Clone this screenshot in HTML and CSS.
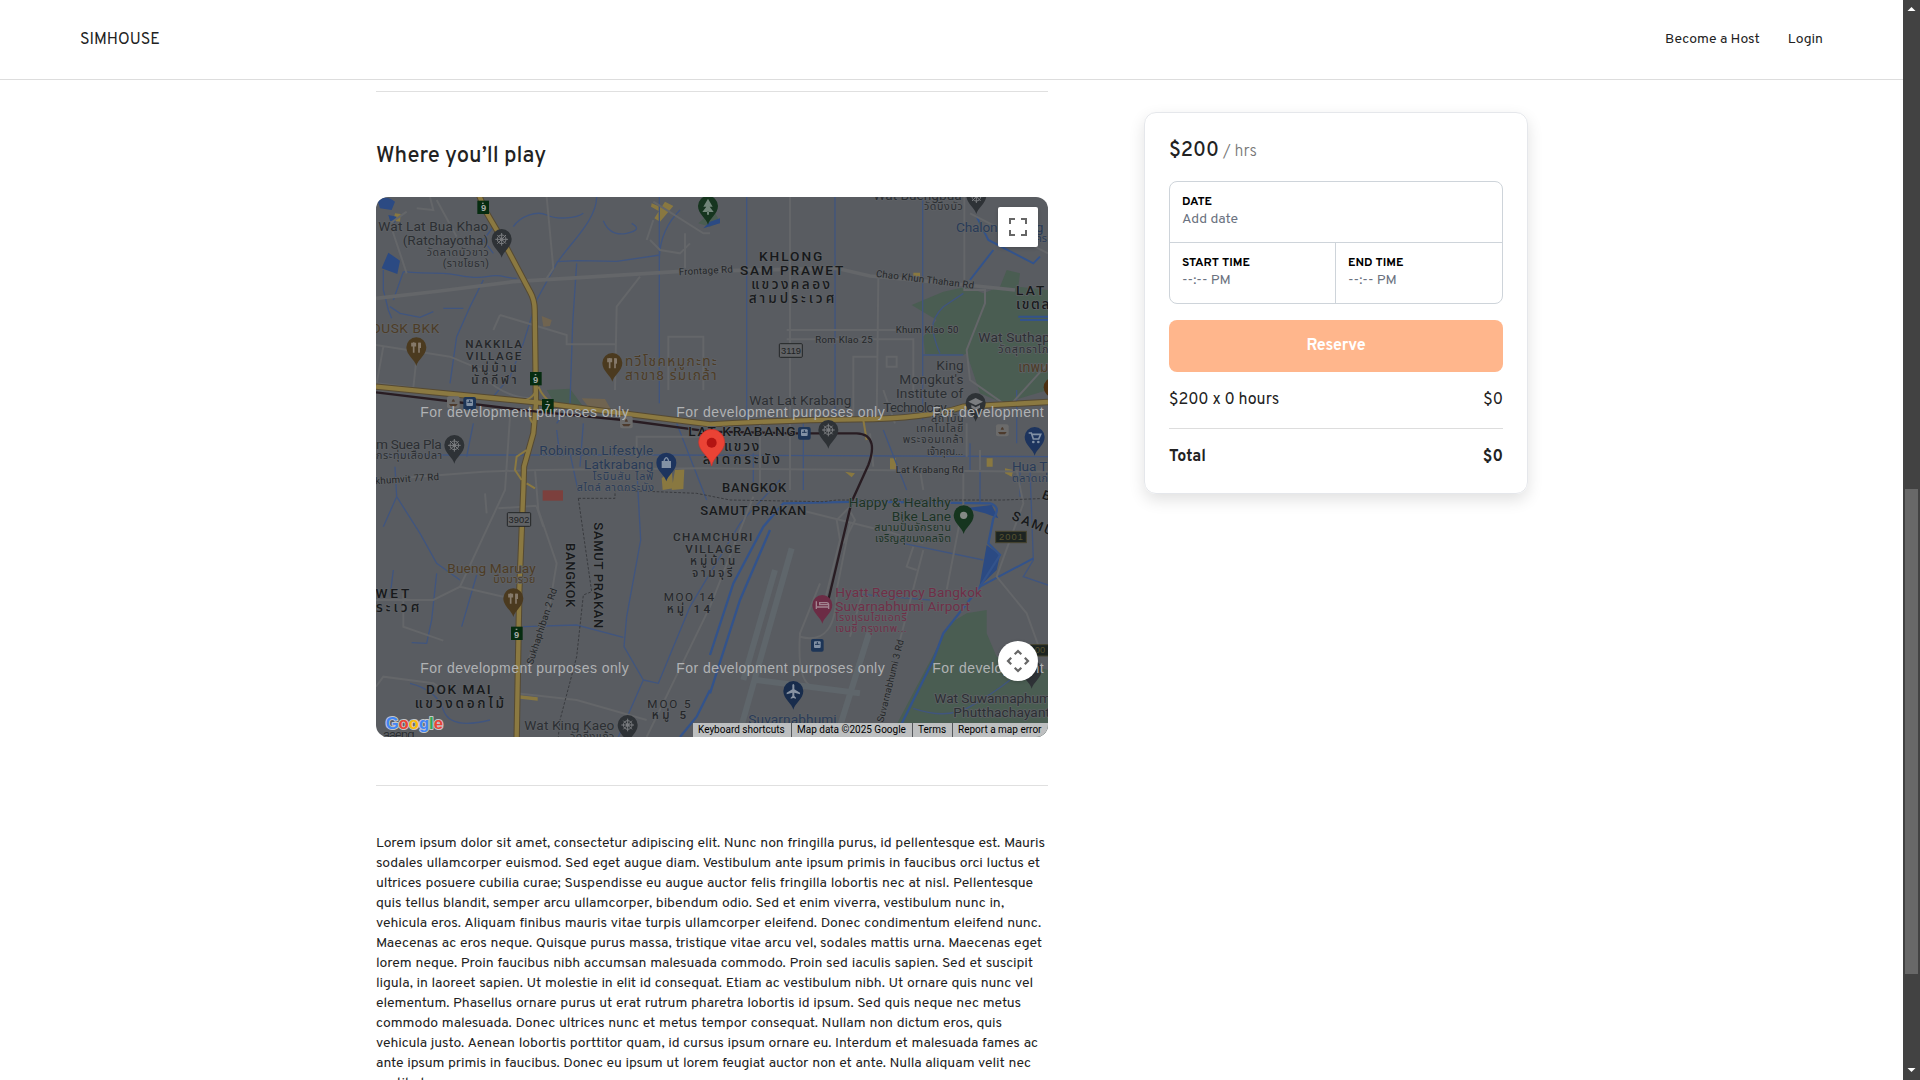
FILE: index.html
```html
<!DOCTYPE html>
<html lang="en">
<head>
<meta charset="utf-8">
<title>SIMHOUSE</title>
<link rel="stylesheet" href="styles.css">
</head>
<body>
<div class="page">
  <header class="header">
    <a class="logo">SIMHOUSE</a>
    <nav class="nav"><a class="nav-host">Become a Host</a><a class="nav-login">Login</a></nav>
  </header>
  <main class="main">
    <div class="content">
      <section class="where">
        <h2 class="title">Where you’ll play</h2>
        <div class="map">
          <svg class="map-svg" viewBox="18 21 2016 1620" width="672" height="540">
            <defs>
              <path id="pin" d="M0 56C-4 38-30 24-30 0A30 30 0 1 1 30 0C30 24 4 38 0 56Z"/>
              <g id="wheel" fill="none" stroke="#7b7d80" stroke-width="3"><circle r="13"/><circle r="4"/><path d="M0-19V19M-19 0H19M-13-13L13 13M13-13L-13 13"/></g>
              <g id="fork" fill="none" stroke="#85796a" stroke-width="5"><path d="M-8-15V16M8 16V-14M-13-14V-5H-3V-14"/><path d="M10-14V2" stroke-width="8"/></g>
              <g id="shield"><rect x="-17" y="-20" width="35" height="40" fill="#062c10"/><rect x="-3" y="-14" width="5" height="4" fill="#8d948e"/></g>
              <g id="train"><rect x="-19" y="-19" width="38" height="38" rx="6" fill="#1d3557"/><rect x="-10" y="-12" width="20" height="20" rx="3" fill="#8291a5"/><path d="M-7-3H7M0-10V-2M-8 13L-4 8M8 13L4 8" stroke="#1d3557" stroke-width="3"/></g>
              <g id="boat"><rect x="-19" y="-18" width="38" height="36" rx="6" fill="#6b6b6b"/><path d="M-13 5H13L8 12H-8ZM-5-2Q0-18 5-2Z" fill="#4d3b2d"/></g>
            </defs>
            <rect x="18" y="21" width="2016" height="1620" fill="#595c61"/>
            <g fill="#4a5d52">
              <path d="M1625 345L1720 305 1790 290 1840 310 1890 290 1910 240 1950 250 1945 290 2034 300V600L1900 640 1830 610 1790 490 1780 495 1665 492 1660 440 1700 390Z"/>
              <path d="M985 100L1030 60 1050 95 1020 110ZM530 600L600 596 640 650H560Z"/>
              <path d="M1740 1300L1790 1270 1850 1260 1850 1330 1880 1400 2034 1440V1641H1560Z"/>
            </g>
            <path d="M635 625L705 627 725 662 655 650ZM515 378L545 390 540 408 520 410Z" fill="#706450"/>
            <g fill="#897840">
              <path d="M885 35L910 48 870 95 853 85ZM845 40L880 55 870 65 843 50Z"/>
              <path d="M875 865L905 840 910 895 878 900ZM915 840L943 838 940 897 905 900ZM450 1516L503 1522V1532L450 1526ZM1560 805H1578V840H1560ZM1850 805H1868V830H1850ZM1630 248H1650V262H1630ZM1425 845L1455 850 1445 862ZM1905 835L1930 840 1925 860 1905 850Z"/>
              <path d="M75 70L92 72 90 95 70 92Z"/>
            </g>
            <rect x="518" y="901" width="61" height="31" fill="#7c403d"/>
            <g fill="#2b4a83">
              <path d="M22 30Q50 15 75 35L65 60 30 55ZM55 188L90 212 82 252 35 235ZM55 75L80 80 75 98 60 92Z"/>
              <path d="M1785 955L1865 945 1885 985 1845 970ZM1850 1065L1890 1095 1880 1140 1828 1190ZM1020 95L1050 85V100L1000 115Z"/>
            </g>
            <g fill="none" stroke="#40557f" stroke-width="4">
              <path d="M680 20C680 90 600 160 560 220L500 330 460 460 420 560 370 620 M430 110C450 80 500 60 530 75S620 85 640 70 M560 215L620 212 740 214 870 195 M868 21V640 M930 60C880 110 868 160 868 210 M620 220L608 400 600 640 560 700 M100 245C150 250 180 250 220 250S300 270 350 260 400 265 440 265 M100 245L70 330 M60 350L90 370 150 382 190 365 M350 70L370 110 340 150 370 190 M340 270L300 350 260 440 240 580 M310 700L290 800 M220 355H280"/>
              <path d="M18 795H900L2034 800 M75 830L80 920 40 1010 M80 920L150 1030 200 1120 270 1170 M200 1150L185 1290 170 1360 125 1358 M70 1140L60 1220M320 1155L275 1310 M460 1310L620 1305 760 1342 M800 830L812 1050 770 1280 762 1370 820 1470 745 1641 M820 1470L865 1480 960 1250 1110 1000 1230 870 M120 1480Q200 1500 220 1560T360 1590 M640 700L630 830 M700 92Q720 140 770 130T785 100"/>
              <path d="M1130 21V690M1395 21V690M1658 21V690 M1660 495H1780 M1780 310L1720 350Q1680 390 1690 430T1710 490 M1940 600V760M1800 760V840M1300 700V900 M1150 790V880M1540 720L1610 900 M1950 830V920 M1980 840L1990 1110 1960 1160 2034 1185 M1830 840V940 M920 700L1010 930"/>
              <path d="M40 240V300L55 360L65 385 M600 790L625 905 M560 720L570 800 M1600 1060L1840 1110 M1440 1210L1680 1230 M1630 1555Q1730 1590 1800 1550T1920 1470"/>
            </g>
            <g fill="none" stroke="#33538b" stroke-width="7">
              <path d="M1020 1395L1090 1180 1180 1010 1240 940 1470 935 1860 940Q1895 950 1870 985L1855 1060 1890 1095 1830 1190 1720 1330 1690 1410 1575 1641"/>
              <path d="M1020 1510L1110 1230 1200 1020 M930 1641L980 1580 1020 1500"/>
              <path d="M1820 80L1855 150 1990 220 2010 200M1870 180L1800 270M1945 380H2034M1950 390H2034M1830 1190L1990 1105" stroke-width="6"/>
            </g>
            <g fill="none" stroke="#646669" stroke-width="6">
              <path d="M18 325L210 303 430 275 640 262 920 245 1400 235 1500 258 1790 285 1935 300" stroke-width="11"/>
              <path d="M530 21L550 235 530 265M140 55L190 60 180 21M200 30L260 140M110 65L60 100 110 250M390 375L540 420 590 435V463H735M390 375L370 420M735 600L740 350 810 260M18 465L240 500 360 550M40 470L20 580 130 593 140 500M340 560Q400 620 480 625M895 600V440H1000V600M800 800V740H1000M420 680L405 900 270 1190 190 1230H18M270 1190L400 1220M18 870L340 845 500 840 1000 835 2034 845M495 840L505 960 560 1120 540 1240 460 1450M385 955L500 947M345 910L350 970M500 950L520 1010M18 1490L40 1460 190 1480 220 1500M100 1210V1310L220 1352M440 1510L620 1530 830 1590M830 1641L1020 1250 1150 920M2034 190L1800 70M850 35L1000 130 1020 130M945 130V235M840 150L870 180 930 190 960 160M830 150L850 90"/>
              <path d="M1260 21V690M1783 21V300H1845V340L1790 480 1800 570 1900 640M1930 635L2034 520M1250 420H1640M1250 448H1630V610M1525 265L1520 690M1450 680V500H1520M1550 500H1580V530H1550ZM1500 730L1510 830M1540 600L1575 700M1330 1490Q1280 1480 1290 1330L1350 1180M1290 1340Q1400 1370 1400 1200L1440 1000M1290 960L1570 1030 1660 1060M1480 1200L1440 1340M1830 780V840M1790 700V800M1780 840V940L1730 1200M1940 840L1960 940 1880 1160 1970 1270 2010 1380M1590 1350L1660 1080M1260 700V900M1170 700V900M1630 1070L1610 1130 1640 1140M1650 840L1660 900"/>
              <path d="M1365 1230L1410 1050 1400 990 1435 955 1455 990 1420 1060"/>
            </g>
            <g fill="none" stroke="#5f666b" stroke-width="18"><path d="M1265 1075L1105 1641M1215 1140L1120 1470M1500 1320L1400 1641M1160 1470L1470 1510"/></g>
            <g fill="none">
              <g stroke="#564a32" stroke-width="19"><path d="M325 10L345 60 395 145 480 305Q494 330 494 360L498 640 490 730 462 830 460 900 448 1200 440 1641"/><path d="M18 590L500 637 1020 703Q1250 690 1460 688T1780 650L2034 636"/></g>
              <g stroke="#8b7941" stroke-width="13"><path d="M325 10L345 60 395 145 480 305Q494 330 494 360L498 640 490 730 462 830 460 900 448 1200 440 1641"/><path d="M18 590L500 637 1020 703Q1250 690 1460 688T1780 650L2034 636"/></g>
              <path d="M498 590Q500 625 450 635M505 590Q520 625 550 642M480 650Q475 690 490 700M470 780L440 800 435 840 455 870M470 880L495 895M1480 690L1490 750" stroke="#8b7941" stroke-width="6"/>
              <path d="M18 607L500 665 760 690 1020 725 1280 730H1460C1515 732 1512 780 1495 825L1445 935 1375 1230" stroke="#281c22" stroke-width="7"/>
              <path d="M625 925H735V900L980 910 1080 930 1360 935 1400 930H1900L2034 925M625 925L665 1205 640 1215 620 1400 570 1590 565 1641" stroke="#393b3f" stroke-width="3" stroke-dasharray="8 5"/>
            </g>

            <g class="poi">
              <text x="25" y="123" textLength="330">Wat Lat Bua Khao</text><text x="98" y="165" textLength="257">(Ratchayotha)</text>
              <text class="th" x="170" y="197" textLength="186">วัดลาดบัวขาว</text><text class="th" x="218" y="230" textLength="139">(ราชโยธา)</text>
              <text x="18" y="777" textLength="197">m Suea Pla</text><text class="th" x="18" y="808" textLength="198">กระทุ่มเสือปลา</text>
              <text x="1138" y="645" textLength="306">Wat Lat Krabang</text>
              <text x="1510" y="29" textLength="265">Wat Buengbua</text><text class="th" x="1662" y="60" textLength="116">วัดบึงบัว</text>
              <text x="1825" y="456" textLength="215">Wat Suthap</text><text class="th" x="1885" y="489" textLength="150">วัดสุทธาโภ</text>
              <text x="1699" y="540" textLength="82">King</text><text x="1588" y="582" textLength="193">Mongkut's</text><text x="1578" y="624" textLength="202">Institute of</text><text x="1540" y="666" textLength="214">Technology...</text>
              <text class="th" x="1683" y="695" textLength="98">สถาบัน</text><text class="th" x="1638" y="727" textLength="142">เทคโนโลยี</text><text class="th" x="1598" y="760" textLength="183">พระจอมเกล้า</text><text class="th" x="1670" y="794" textLength="110">เจ้าคุณ...</text>
              <text x="463" y="1621" textLength="270">Wat King Kaeo</text><text class="th" x="600" y="1650" textLength="133">วัดกิ่งแก้ว</text>
              <text x="1693" y="1540" textLength="350">Wat Suwannaphum</text><text x="1750" y="1582" textLength="290">Phutthachayant</text>
              <text x="38" y="1647" textLength="96">aaeng</text>
            </g>
            <g class="poi blue">
              <text x="508" y="795" textLength="342">Robinson Lifestyle</text><text x="642" y="836" textLength="208">Latkrabang</text><text class="th" x="668" y="871" textLength="182">โรบินสัน ไลฟ์</text><text class="th" x="620" y="904" textLength="232">สไตล์ ลาดกระบัง</text>
              <text x="1758" y="126" textLength="262">Chalong Krung</text><text class="th" x="1996" y="156">คร</text>
              <text x="1926" y="842" textLength="106">Hua T</text><text class="th" x="1926" y="875" textLength="108">ตลาดเก่</text>
              <text x="1135" y="1603" textLength="265">Suvarnabhumi</text><text x="1207" y="1642" textLength="120">Airport</text>
            </g>
            <g class="poi brown">
              <text x="5" y="429" textLength="203">DUSK BKK</text><text x="765" y="528" textLength="275">ทวีโชคหมูกะทะ</text><text x="765" y="569" textLength="275">สาขา8 ร่มเกล้า</text>
              <text x="232" y="1150" textLength="265">Bueng Maruay</text><text class="th" x="370" y="1180" textLength="126">บึงมารวย</text><text x="1945" y="546" textLength="90">เทพม</text>
            </g>
            <g class="poi green">
              <text x="1436" y="952" textLength="306">Happy &amp; Healthy</text><text x="1565" y="993" textLength="178">Bike Lane</text><text class="th" x="1513" y="1023" textLength="230">สนามปั่นจักรยาน</text><text class="th" x="1515" y="1056" textLength="228">เจริญสุขมงคลจิต</text>
            </g>
            <g class="poi pink">
              <text x="1396" y="1222" textLength="440">Hyatt Regency Bangkok</text><text x="1396" y="1263" textLength="404">Suvarnabhumi Airport</text><text class="th" x="1396" y="1292" textLength="214">โรงแรมไฮแอทรี</text><text class="th" x="1396" y="1326" textLength="214">เจนซี่ กรุงเทพ...</text>
            </g>
            <g class="area">
              <text x="1167" y="213" textLength="190">KHLONG</text><text x="1110" y="255" textLength="310">SAM PRAWET</text><text x="1144" y="297" textLength="236">แขวงคลอง</text><text x="1136" y="339" textLength="257">สามประเวศ</text>
              <text x="1938" y="315" textLength="85">LAT</text><text x="1938" y="356" textLength="100">เขตล</text>
              <text x="955" y="739" textLength="322">LAT KRABANG</text><text x="1062" y="782" textLength="106">แขวง</text><text x="998" y="823" textLength="232">ลาดกระบัง</text>
              <text x="-18" y="1224" textLength="136">AWET</text><text x="18" y="1266" textLength="130">ระเวศ</text>
              <text x="168" y="1512" textLength="194">DOK MAI</text><text x="134" y="1553" textLength="268">แขวงดอกไม้</text>
            </g>
            <g class="area tight">
              <text x="1056" y="905" textLength="193">BANGKOK</text><text x="991" y="975" textLength="318">SAMUT PRAKAN</text>
              <text transform="translate(589 1059) rotate(90)" textLength="193">BANGKOK</text><text transform="translate(673 997) rotate(90)" textLength="318">SAMUT PRAKAN</text>
              <text transform="translate(1923 988) rotate(22)" textLength="160">SAMUT</text><text transform="translate(2014 925) rotate(20)">BAN</text>
            </g>
            <g class="village">
              <text x="286" y="475" textLength="170">NAKKILA</text><text x="288" y="511" textLength="166">VILLAGE</text><text x="304" y="546" textLength="136">หมู่บ้าน</text><text x="304" y="581" textLength="136">นักกีฬา</text>
              <text x="909" y="1053" textLength="238">CHAMCHURI</text><text x="946" y="1089" textLength="166">VILLAGE</text><text x="960" y="1125" textLength="136">หมู่บ้าน</text><text x="966" y="1160" textLength="122">จามจุรี</text>
              <text class="thin" x="881" y="1234" textLength="151">MOO 14</text><text x="890" y="1270" textLength="130">หมู่ 14</text>
              <text class="thin" x="832" y="1553" textLength="130">MOO 5</text><text x="845" y="1588" textLength="103">หมู่ 5</text>
            </g>
            <g class="road">
              <text transform="translate(927 256) rotate(-3)" textLength="162">Frontage Rd</text><text transform="translate(1517 260) rotate(7)" textLength="296">Chao Khun Thahan Rd</text>
              <text x="1577" y="430" textLength="188">Khum Klao 50</text><text x="1336" y="460" textLength="172">Rom Klao 25</text><text x="1577" y="850" textLength="204">Lat Krabang Rd</text>
              <text transform="translate(0 884) rotate(-4)" textLength="208">ukhumvit 77 Rd</text><text transform="translate(488 1425) rotate(-72)" textLength="238">Sukhaphiban 2 Rd</text><text transform="translate(1540 1598) rotate(-76)" textLength="254">Suvarnabhumi 3 Rd</text>
            </g>

            <use href="#pin" x="395" y="147" fill="#2e3236"/><use href="#wheel" x="395" y="148"/>
            <use href="#pin" x="253" y="765" fill="#2e3236"/><use href="#wheel" x="253" y="766"/>
            <use href="#pin" x="1375" y="720" fill="#2e3236"/><use href="#wheel" x="1375" y="720"/>
            <use href="#pin" x="773" y="1605" fill="#2e3236"/><use href="#wheel" x="773" y="1605"/>
            <use href="#pin" x="1819" y="16" fill="#2e3236"/><use href="#wheel" x="1819" y="20"/>
            <use href="#pin" x="139" y="472" fill="#4b3a1f"/><use href="#fork" x="139" y="472"/>
            <use href="#pin" x="727" y="519" fill="#4b3a1f"/><use href="#fork" x="727" y="519"/>
            <use href="#pin" x="430" y="1225" fill="#4b3a1f"/><use href="#fork" x="430" y="1225"/>
            <circle cx="2050" cy="592" r="29" fill="#4d3010"/>
            <use href="#pin" x="1014" y="48" fill="#16351f"/><path d="M1014 26L1000 50H1009L997 66H1031L1019 50H1028ZM1011 65H1017V74H1011Z" fill="#718579"/>
            <use href="#pin" x="1781" y="976" fill="#16351f"/><circle cx="1781" cy="976" r="11" fill="#848985"/>
            <use href="#pin" x="889" y="818" fill="#1d345e"/><path d="M875 813H903V834H875Z" fill="#8291a5"/><path d="M882 813Q889 793 896 813M884 822Q889 831 894 822" fill="none" stroke="#8291a5" stroke-width="4"/>
            <use href="#pin" x="1994" y="741" fill="#1d345e"/><path d="M1976 729H1984L1990 747H2006L2012 733H1986" fill="none" stroke="#8291a5" stroke-width="5"/><circle cx="1990" cy="756" r="4" fill="#8291a5"/><circle cx="2005" cy="756" r="4" fill="#8291a5"/>
            <use href="#pin" x="1817" y="639" fill="#2e3236"/><path d="M1795 635L1817 624 1839 635 1817 646ZM1804 645L1817 652 1830 645V653L1817 661 1804 653Z" fill="#7b7d80"/>
            <use href="#pin" x="1357" y="1245" fill="#6c2c45"/><path d="M1339 1234V1257M1339 1251H1376V1244H1349V1238H1370Q1376 1238 1376 1246V1257" fill="none" stroke="#a28490" stroke-width="4"/>
            <use href="#pin" x="1270" y="1503" fill="#182c4c"/><path d="M1267 1485Q1270 1479 1273 1485V1498L1290 1508V1513L1273 1508V1518L1278 1523V1526L1270 1524 1262 1526V1523L1267 1518V1508L1250 1513V1508L1267 1498Z" fill="#8893a3"/>
            <use href="#pin" x="1985" y="1440" fill="#2e3236"/>
            <use href="#train" x="299" y="640"/><use href="#train" x="1303" y="730"/><use href="#train" x="1342" y="1366"/>
            <use href="#boat" x="250" y="637"/><use href="#boat" x="769" y="697"/><use href="#boat" x="1897" y="721"/>
            <use href="#shield" x="339" y="52"/><use href="#shield" x="497" y="566"/><use href="#shield" x="533" y="647"/><use href="#shield" x="440" y="1330"/>
            <g class="num"><text x="341" y="63">9</text><text x="497" y="578">9</text><text x="533" y="659">7</text><text x="440" y="1343">9</text></g>
            <g fill="#616366" stroke="#242628" stroke-width="3"><rect x="1228" y="461" width="69" height="41" rx="3"/><rect x="412" y="968" width="70" height="41" rx="3"/></g>
            <g class="num dark"><text x="1263" y="493">3119</text><text x="447" y="1000">3902</text></g>
            <g fill="#1d2422" stroke="#47442e" stroke-width="3"><rect x="1877" y="1024" width="92" height="34"/><rect x="1975" y="1364" width="70" height="34"/></g>
            <g class="num olive"><text x="1923" y="1051" textLength="72">2001</text><text x="2010" y="1388">00</text></g>

            <path d="M1025 828C1020 800 986 785 986 757A39 39 0 0 1 1064 757C1064 785 1030 800 1025 828Z" fill="#ea4335" stroke="#d0302a" stroke-width="2"/>
            <circle cx="1025" cy="758" r="15" fill="#b31412"/>
            <g class="dev">
              <text x="151" y="682" textLength="625">For development purposes only</text><text x="919" y="682" textLength="625">For development purposes only</text><text x="1687" y="682" textLength="625">For development purposes only</text>
              <text x="151" y="1450" textLength="625">For development purposes only</text><text x="919" y="1450" textLength="625">For development purposes only</text><text x="1687" y="1450" textLength="625">For development purposes only</text>
            </g>
            <text class="google" x="47" y="1617" textLength="172"><tspan fill="#4285f4">G</tspan><tspan fill="#ea4335">o</tspan><tspan fill="#fbbc05">o</tspan><tspan fill="#4285f4">g</tspan><tspan fill="#34a853">l</tspan><tspan fill="#ea4335">e</tspan></text>
          </svg>
          <button class="map-btn map-full" aria-label="Toggle fullscreen"><svg width="18" height="18" viewBox="0 0 18 18"><path d="M0 0v6h2V2h4V0zM16 0h-4v2h4v4h2V0zM16 16h-4v2h6v-6h-2zM2 12H0v6h6v-2H2z" fill="#666"/></svg></button>
          <button class="map-btn map-cam" aria-label="Map camera controls"><svg width="24" height="24" viewBox="0 0 24 24"><path d="M8.7 5.2L12 2l3.3 3.2M8.7 18.8L12 22l3.3-3.2M5.2 8.7L2 12l3.2 3.3M18.8 8.7L22 12l-3.2 3.3" fill="none" stroke="#666" stroke-width="2.2"/></svg></button>
          <div class="credits"><span class="c1">Keyboard shortcuts</span><span class="c2">Map data ©2025 Google</span><span class="c3">Terms</span><span class="c4">Report a map error</span></div>
        </div>
      </section>
      <section class="about">
        <div class="line w1">Lorem ipsum dolor sit amet, consectetur adipiscing elit. Nunc non fringilla purus, id pellentesque est. Mauris</div>
        <div class="line w2">sodales ullamcorper euismod. Sed eget augue diam. Vestibulum ante ipsum primis in faucibus orci luctus et</div>
        <div class="line w3">ultrices posuere cubilia curae; Suspendisse eu augue auctor felis fringilla lobortis nec at nisl. Pellentesque</div>
        <div class="line w4">quis tellus blandit, semper arcu ullamcorper, bibendum odio. Sed et enim viverra, vestibulum nunc in,</div>
        <div class="line w5">vehicula eros. Aliquam finibus mauris vitae turpis ullamcorper eleifend. Donec condimentum eleifend nunc.</div>
        <div class="line w6">Maecenas ac eros neque. Quisque purus massa, tristique vitae arcu vel, sodales mattis urna. Maecenas eget</div>
        <div class="line w7">lorem neque. Proin faucibus nibh accumsan malesuada commodo. Proin sed iaculis sapien. Sed et suscipit</div>
        <div class="line w8">ligula, in laoreet sapien. Ut molestie in elit id consequat. Etiam ac vestibulum nibh. Ut ornare quis nunc vel</div>
        <div class="line w9">elementum. Phasellus ornare purus ut erat rutrum pharetra lobortis id ipsum. Sed quis neque nec metus</div>
        <div class="line w10">commodo malesuada. Donec ultrices nunc et metus tempor consequat. Nullam non dictum eros, quis</div>
        <div class="line w11">vehicula justo. Aenean lobortis porttitor quam, id cursus ipsum ornare eu. Interdum et malesuada fames ac</div>
        <div class="line w12">ante ipsum primis in faucibus. Donec eu ipsum ut lorem feugiat auctor non et ante. Nulla aliquam velit nec</div>
        <div class="line w13">vestibulum posuere.</div>
      </section>
    </div>
    <aside class="card">
      <div class="price"><span class="amount">$200</span><span class="per">/ hrs</span></div>
      <div class="fields">
        <div class="field date"><span class="label">DATE</span><span class="value">Add date</span></div>
        <div class="field start"><span class="label">START TIME</span><span class="value">--:-- PM</span></div>
        <div class="field end"><span class="label">END TIME</span><span class="value">--:-- PM</span></div>
      </div>
      <button class="reserve">Reserve</button>
      <div class="row"><span>$200 x 0 hours</span><span>$0</span></div>
      <div class="row total"><span>Total</span><span>$0</span></div>
    </aside>
  </main>
</div>
<div class="scrollbar">
  <svg width="9" height="5" viewBox="0 0 9 5"><path d="M4.5 0L8.5 4H.5Z" fill="#fff"/></svg>
  <div class="thumb"></div>
  <svg width="9" height="5" viewBox="0 0 9 5"><path d="M4.5 4L8.5 0H.5Z" fill="#fff"/></svg>
</div>
</body>
</html>
```
FILE: styles.css
```css
* { box-sizing: border-box; }
body { margin: 0; height: 1080px; overflow: hidden; display: flex; background: #fff; color: #222; font-family: Overpass, Roboto, "Liberation Sans", sans-serif; font-size: 14px; line-height: 20px; }
.page { flex: 1; height: 1080px; overflow: hidden; }
.header { height: 80px; padding: 0 80px; display: flex; align-items: center; justify-content: space-between; border-bottom: 1px solid #ddd; }
.logo { font-size: 16px; }
.nav { display: flex; gap: 28px; }
.main { display: flex; align-items: flex-start; gap: 96px; padding: 11px 0 0 376px; }
.content { width: 672px; }
.where { border-top: 1px solid #e0e0e0; border-bottom: 1px solid #e0e0e0; padding: 49px 0 48px; height: 695px; }
.title { margin: 0 0 24px; font-size: 22px; line-height: 32px; font-weight: 500; }
.map { position: relative; width: 672px; height: 540px; border-radius: 12px; overflow: hidden; }
.map-svg { display: block; font-family: Roboto, "Noto Sans Thai", sans-serif; }
.map-svg text { paint-order: stroke; stroke: #5e6165; stroke-width: 5px; stroke-linejoin: round; }
.poi { font-size: 41px; fill: #2c2f33; }
.poi .th { font-size: 32px; }
.blue { fill: #293b58; }
.brown { fill: #4d3c26; }
.green { fill: #1c3426; }
.pink { fill: #702f48; }
.area { font-size: 41px; font-weight: 500; fill: #17191b; }
.tight { font-size: 39px; }
.village { font-size: 35px; font-weight: 500; fill: #25272a; }
.village .thin { font-weight: 400; }
.road { font-size: 29px; fill: #242628; }
.map-svg .num text { font: bold 28px "Liberation Sans", sans-serif; fill: #a5aaa5; stroke: none; text-anchor: middle; }
.map-svg .dark text { font-weight: 400; fill: #202224; }
.map-svg .olive text { font-weight: 400; fill: #57522f; }
.map-svg .dev text { font: 42px "Liberation Sans", sans-serif; fill: #b0b2b4; stroke: none; }
.map-svg .google { font: bold 50px "Liberation Sans", sans-serif; stroke: #c3c6c9; stroke-width: 6px; }
.map-btn { position: absolute; right: 10px; width: 40px; height: 40px; padding: 0; border: 0; background: #fff; display: flex; align-items: center; justify-content: center; box-shadow: 0 1px 4px -1px rgba(0,0,0,.3); }
.map-full { top: 10px; border-radius: 2px; }
.map-cam { top: 444px; border-radius: 50%; }
.credits { position: absolute; right: 0; bottom: 0; height: 14px; display: flex; background: #bdbfc0; color: #000; font: 10px/14px Roboto, sans-serif; white-space: nowrap; }
.credits span { padding-left: 5px; border-left: 1px solid #55585c; }
.credits .c1 { width: 98px; border-left: 0; }
.credits .c2 { width: 121px; }
.credits .c3 { width: 40px; }
.credits .c4 { width: 96px; }
.about { padding-top: 48px; }
.line { white-space: nowrap; text-align-last: justify; letter-spacing: -.1px; }
.w1 { width: 669px; } .w2 { width: 664px; } .w3 { width: 657px; } .w4 { width: 628px; }
.w5 { width: 665px; } .w6 { width: 666px; } .w7 { width: 657px; } .w8 { width: 657px; }
.w9 { width: 645px; } .w10 { width: 626px; } .w11 { width: 662px; } .w12 { width: 655px; } .w13 { width: 121px; }
.card { width: 384px; height: 382px; margin-top: 21px; padding: 24px; border: 1px solid #e5e7eb; border-radius: 12px; box-shadow: 0 6px 16px rgba(0,0,0,.12); }
.price { display: flex; align-items: baseline; gap: 4px; height: 44px; line-height: 29px; }
.amount { font-size: 20px; font-weight: 500; }
.per { font-size: 16px; color: #777; font-weight: 300; }
.fields { display: grid; grid-template-columns: 166px 1fr; grid-template-rows: 61px 61px; border: 1px solid #ced4da; border-radius: 8px; height: 123px; }
.field { padding: 11px 12px 8px; display: flex; flex-direction: column; line-height: 18px; }
.date { grid-column: 1 / 3; border-bottom: 1px solid #ced4da; }
.start { border-right: 1px solid #ced4da; }
.label { font-size: 12px; font-weight: 700; color: #000; }
.value { color: #6b7280; }
.reserve { display: block; width: 100%; height: 52px; margin-top: 16px; padding: 0; border: 0; border-radius: 8px; background: #ffb68c; color: #fff; font: 700 16px/24px Overpass, Roboto, sans-serif; letter-spacing: -.2px; }
.row { display: flex; justify-content: space-between; font-size: 16px; line-height: 24px; padding: 16px 0; }
.total { border-top: 1px solid #ddd; padding: 16px 0; font-weight: 700; }
.scrollbar { width: 17px; height: 1080px; padding: 7px 2px; background: #424242; display: flex; flex-direction: column; align-items: center; }
.thumb { width: 13px; height: 485px; margin: 477px 0 auto; background: #686868; }
```
